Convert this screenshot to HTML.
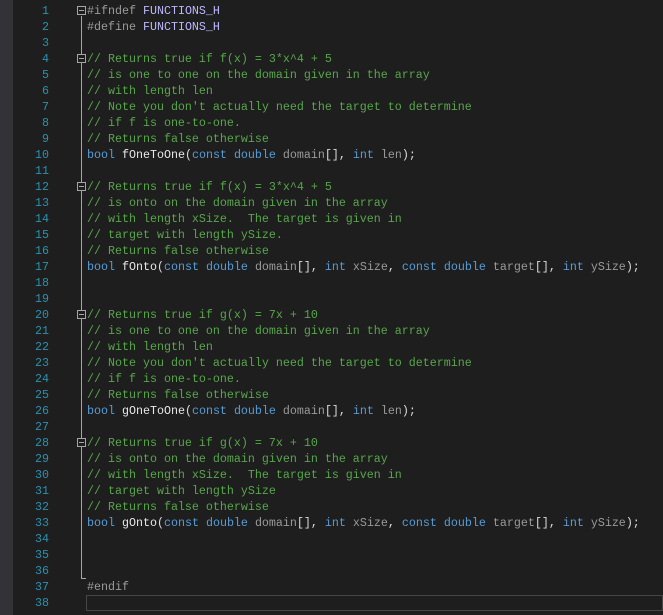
<!DOCTYPE html>
<html><head><style>
body{margin:0;width:663px;height:615px;background:#1e1e1e;overflow:hidden;position:relative;font-family:"Liberation Mono",monospace;font-size:11.67px}
.strip{position:absolute;left:0;top:0;width:13px;height:615px;background:#333337}
.ln{position:absolute;left:13px;width:36px;text-align:right;color:#2b91af;height:16px;line-height:16px}
.c{position:absolute;left:87px;white-space:pre;height:16px;line-height:16px;color:#dcdcdc}
.g{color:#57a64a}.k{color:#569cd6}.p{color:#9b9b9b}.m{color:#bdb7ff}.v{color:#9a9a9a}.f{color:#e8e8e8}
.box{position:absolute;left:77px;width:7px;height:7px;border:1px solid #a5a5a5;background:#1e1e1e}
.box:after{content:"";position:absolute;left:1px;top:3px;width:5px;height:1px;background:#a5a5a5}
.vl{position:absolute;left:81px;top:16px;width:1px;height:563px;background:#a5a5a5}
.tk{position:absolute;left:81px;top:578px;width:5px;height:1px;background:#a5a5a5}
.cur{position:absolute;left:86px;top:595px;width:575px;height:14px;border:1px solid #464646}
</style></head><body>
<div class="strip"></div>
<div class="vl"></div><div class="tk"></div>
<div class="cur"></div>
<div id="n"></div>
<div class="ln" style="top:3px">1</div><div class="ln" style="top:19px">2</div><div class="ln" style="top:35px">3</div><div class="ln" style="top:51px">4</div><div class="ln" style="top:67px">5</div><div class="ln" style="top:83px">6</div><div class="ln" style="top:99px">7</div><div class="ln" style="top:115px">8</div><div class="ln" style="top:131px">9</div><div class="ln" style="top:147px">10</div><div class="ln" style="top:163px">11</div><div class="ln" style="top:179px">12</div><div class="ln" style="top:195px">13</div><div class="ln" style="top:211px">14</div><div class="ln" style="top:227px">15</div><div class="ln" style="top:243px">16</div><div class="ln" style="top:259px">17</div><div class="ln" style="top:275px">18</div><div class="ln" style="top:291px">19</div><div class="ln" style="top:307px">20</div><div class="ln" style="top:323px">21</div><div class="ln" style="top:339px">22</div><div class="ln" style="top:355px">23</div><div class="ln" style="top:371px">24</div><div class="ln" style="top:387px">25</div><div class="ln" style="top:403px">26</div><div class="ln" style="top:419px">27</div><div class="ln" style="top:435px">28</div><div class="ln" style="top:451px">29</div><div class="ln" style="top:467px">30</div><div class="ln" style="top:483px">31</div><div class="ln" style="top:499px">32</div><div class="ln" style="top:515px">33</div><div class="ln" style="top:531px">34</div><div class="ln" style="top:547px">35</div><div class="ln" style="top:563px">36</div><div class="ln" style="top:579px">37</div><div class="ln" style="top:595px">38</div>
<div class="box" style="top:6px"></div><div class="box" style="top:54px"></div><div class="box" style="top:182px"></div><div class="box" style="top:310px"></div><div class="box" style="top:438px"></div>
<div class="c" style="top:3px"><span class="p">#ifndef</span> <span class="m">FUNCTIONS_H</span></div>
<div class="c" style="top:19px"><span class="p">#define</span> <span class="m">FUNCTIONS_H</span></div>
<div class="c g" style="top:51px">// Returns true if f(x) = 3*x^4 + 5</div>
<div class="c g" style="top:67px">// is one to one on the domain given in the array</div>
<div class="c g" style="top:83px">// with length len</div>
<div class="c g" style="top:99px">// Note you don't actually need the target to determine</div>
<div class="c g" style="top:115px">// if f is one-to-one.</div>
<div class="c g" style="top:131px">// Returns false otherwise</div>
<div class="c" style="top:147px"><span class="k">bool</span> <span class="f">fOneToOne</span>(<span class="k">const</span> <span class="k">double</span> <span class="v">domain</span>[], <span class="k">int</span> <span class="v">len</span>);</div>
<div class="c g" style="top:179px">// Returns true if f(x) = 3*x^4 + 5</div>
<div class="c g" style="top:195px">// is onto on the domain given in the array</div>
<div class="c g" style="top:211px">// with length xSize.  The target is given in</div>
<div class="c g" style="top:227px">// target with length ySize.</div>
<div class="c g" style="top:243px">// Returns false otherwise</div>
<div class="c" style="top:259px"><span class="k">bool</span> <span class="f">fOnto</span>(<span class="k">const</span> <span class="k">double</span> <span class="v">domain</span>[], <span class="k">int</span> <span class="v">xSize</span>, <span class="k">const</span> <span class="k">double</span> <span class="v">target</span>[], <span class="k">int</span> <span class="v">ySize</span>);</div>
<div class="c g" style="top:307px">// Returns true if g(x) = 7x + 10</div>
<div class="c g" style="top:323px">// is one to one on the domain given in the array</div>
<div class="c g" style="top:339px">// with length len</div>
<div class="c g" style="top:355px">// Note you don't actually need the target to determine</div>
<div class="c g" style="top:371px">// if f is one-to-one.</div>
<div class="c g" style="top:387px">// Returns false otherwise</div>
<div class="c" style="top:403px"><span class="k">bool</span> <span class="f">gOneToOne</span>(<span class="k">const</span> <span class="k">double</span> <span class="v">domain</span>[], <span class="k">int</span> <span class="v">len</span>);</div>
<div class="c g" style="top:435px">// Returns true if g(x) = 7x + 10</div>
<div class="c g" style="top:451px">// is onto on the domain given in the array</div>
<div class="c g" style="top:467px">// with length xSize.  The target is given in</div>
<div class="c g" style="top:483px">// target with length ySize</div>
<div class="c g" style="top:499px">// Returns false otherwise</div>
<div class="c" style="top:515px"><span class="k">bool</span> <span class="f">gOnto</span>(<span class="k">const</span> <span class="k">double</span> <span class="v">domain</span>[], <span class="k">int</span> <span class="v">xSize</span>, <span class="k">const</span> <span class="k">double</span> <span class="v">target</span>[], <span class="k">int</span> <span class="v">ySize</span>);</div>
<div class="c" style="top:579px"><span class="p">#endif</span></div>
</body></html>
